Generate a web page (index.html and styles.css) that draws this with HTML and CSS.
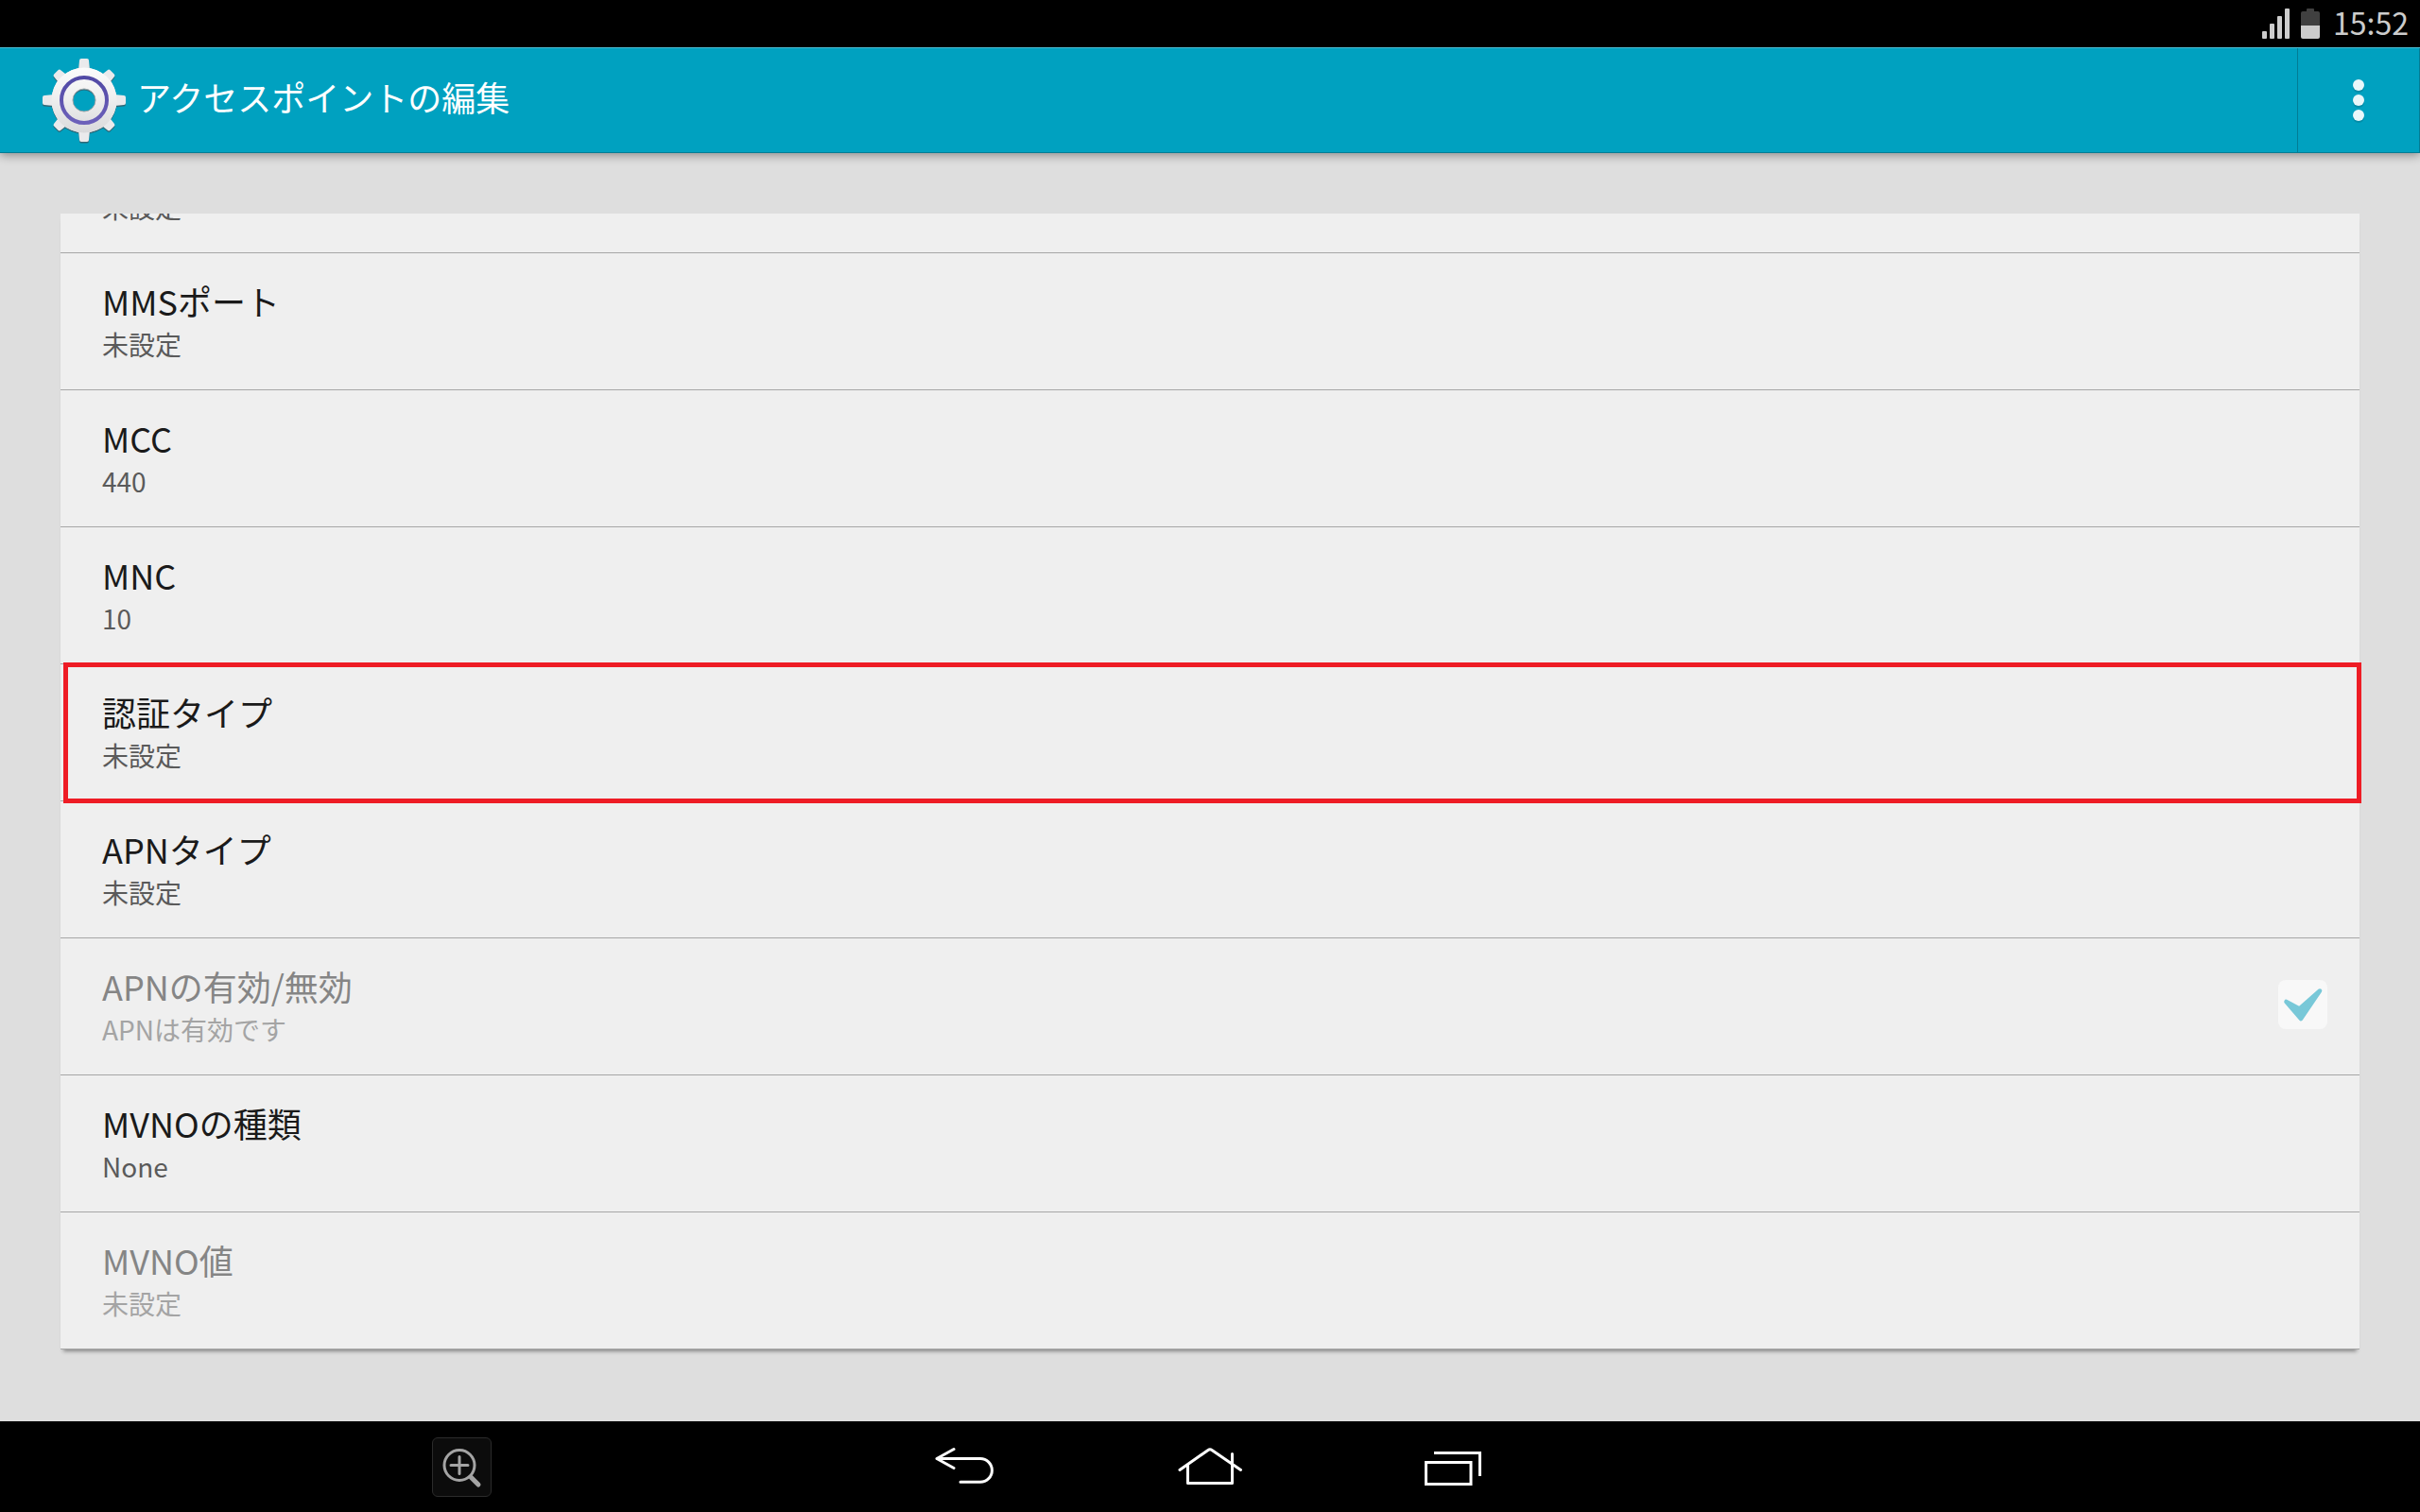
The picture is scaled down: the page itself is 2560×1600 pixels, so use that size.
FILE: index.html
```html
<!DOCTYPE html>
<html lang="ja">
<head>
<meta charset="utf-8">
<meta name="viewport" content="width=device-width, initial-scale=1">
<title>アクセスポイントの編集</title>
<link rel="stylesheet" href="styles.css">
</head>
<body>
<div class="status-bar">
  <svg class="status-icon" width="61" height="32" viewBox="0 0 61 32" aria-hidden="true">
    <g fill="#cccccc">
      <rect x="0" y="24" width="5" height="8" rx="1"/>
      <rect x="8" y="16" width="5" height="16" rx="1"/>
      <rect x="16" y="8" width="5" height="24" rx="1"/>
      <rect x="24" y="0" width="5" height="32" rx="1"/>
    </g>
    <path d="M41 18V5q0-2 2-2h4V1q0-1 1-1h6q1 0 1 1v2h4q2 0 2 2v13z" fill="#404040"/>
    <path d="M41 18h20v12q0 2-2 2H43q-2 0-2-2z" fill="#cccccc"/>
  </svg>
  <time class="clock">15:52</time>
</div>

<header class="action-bar">
  <svg class="gear" width="96" height="96" viewBox="-48 -48 96 96" aria-hidden="true">
    <defs>
      <linearGradient id="metal" gradientUnits="userSpaceOnUse" x1="0" y1="-44" x2="0" y2="44">
        <stop offset="0" stop-color="#ffffff"/>
        <stop offset="0.45" stop-color="#f0f0f0"/>
        <stop offset="1" stop-color="#d4d4d6"/>
      </linearGradient>
      <linearGradient id="ring" x1="0" y1="0" x2="0" y2="1">
        <stop offset="0" stop-color="#5149a5"/>
        <stop offset="1" stop-color="#6c60ba"/>
      </linearGradient>
      <path id="tooth" d="M-6-32L-5-42Q-5-44-3-44H3Q5-44 5-42L6-32z"/>
      <path id="tooth-short" d="M-6-32L-5-40Q-5-42-3-42H3Q5-42 5-40L6-32z"/>
      <g id="gear-shape">
        <path fill-rule="evenodd" d="M0-34.500A34.500 34.500 0 1 1 0 34.500A34.500 34.500 0 1 1 0-34.500zM0-12A12 12 0 1 0 0 12A12 12 0 1 0 0-12z"/>
        <use href="#tooth"/>
        <use href="#tooth" transform="rotate(90)"/>
        <use href="#tooth" transform="rotate(180)"/>
        <use href="#tooth" transform="rotate(270)"/>
        <use href="#tooth-short" transform="rotate(45)"/>
        <use href="#tooth-short" transform="rotate(135)"/>
        <use href="#tooth-short" transform="rotate(225)"/>
        <use href="#tooth-short" transform="rotate(315)"/>
      </g>
    </defs>
    <use href="#gear-shape" y="1.500" fill="#3c5a66" opacity="0.8"/>
    <g fill="#eaeaec">
      <use href="#gear-shape"/>
    </g>
    <path fill="url(#metal)" fill-rule="evenodd" d="M0-34.500A34.500 34.500 0 1 1 0 34.500A34.500 34.500 0 1 1 0-34.500zM0-12A12 12 0 1 0 0 12A12 12 0 1 0 0-12z"/>
    <circle r="24" fill="none" stroke="url(#ring)" stroke-width="4"/>
    <circle r="12" fill="none" stroke="#9aa4a8" stroke-width="1"/>
  </svg>
  <h1 class="title">アクセスポイントの編集</h1>
  <button class="overflow" type="button" aria-label="その他">
    <svg width="20" height="48" viewBox="0 0 20 48" aria-hidden="true">
      <g fill="#057f99" opacity="0.6"><circle cx="10" cy="10" r="6"/><circle cx="10" cy="26" r="6"/><circle cx="10" cy="42" r="6"/></g>
      <g fill="#e9f7fa"><circle cx="10" cy="8" r="6"/><circle cx="10" cy="24" r="6"/><circle cx="10" cy="40" r="6"/></g>
    </svg>
  </button>
</header>

<main class="content">
  <ul class="card">
    <li class="item"><button class="row" type="button"><span class="texts"><span class="value">未設定</span></span></button></li>
    <li class="item"><button class="row" type="button"><span class="texts"><span class="name">MMSポート</span><span class="value">未設定</span></span></button></li>
    <li class="item"><button class="row" type="button"><span class="texts"><span class="name">MCC</span><span class="value">440</span></span></button></li>
    <li class="item"><button class="row" type="button"><span class="texts"><span class="name">MNC</span><span class="value">10</span></span></button></li>
    <li class="item highlighted"><button class="row" type="button"><span class="texts"><span class="name">認証タイプ</span><span class="value">未設定</span></span></button></li>
    <li class="item"><button class="row" type="button"><span class="texts"><span class="name">APNタイプ</span><span class="value">未設定</span></span></button></li>
    <li class="item">
      <label class="row disabled" for="apn-enabled">
        <span class="texts"><span class="name">APNの有効/無効</span><span class="value">APNは有効です</span></span>
        <span class="check">
          <input class="check-input" id="apn-enabled" type="checkbox" checked disabled>
          <svg class="check-mark" width="52" height="52" viewBox="0 0 52 52" aria-hidden="true">
            <path d="M8.500 23L24 41L44 11.500L22.500 30.500z" fill="#78c8d8" stroke="#78c8d8" stroke-width="4.600" stroke-linejoin="round"/>
          </svg>
        </span>
      </label>
    </li>
    <li class="item"><button class="row" type="button"><span class="texts"><span class="name">MVNOの種類</span><span class="value">None</span></span></button></li>
    <li class="item"><button class="row disabled" type="button" disabled><span class="texts"><span class="name">MVNO値</span><span class="value">未設定</span></span></button></li>
  </ul>
</main>

<nav class="nav-bar" aria-label="システム">
  <button class="zoom-button" type="button" aria-label="拡大">
    <svg width="61" height="61" viewBox="0 0 61 61" fill="none" stroke="#a4a4a4" stroke-linecap="round" aria-hidden="true">
      <circle cx="28" cy="28.500" r="16" stroke-width="3"/>
      <path d="M28 19.500V37.500M19 28.500H37" stroke-width="3"/>
      <path d="M40 41L48 49" stroke-width="5"/>
    </svg>
  </button>
  <button class="nav-button" type="button" aria-label="戻る">
    <svg width="260" height="96" viewBox="0 0 260 96" aria-hidden="true"><path d="M119 29.500L101 39.500L119 49.500M101 39.500H147A12.400 12.400 0 0 1 147 64.300H126"/></svg>
  </button>
  <button class="nav-button" type="button" aria-label="ホーム">
    <svg width="260" height="96" viewBox="0 0 260 96" aria-hidden="true"><path d="M98 51.500L128 30.500Q130 29 132 30.500L162.500 51.500M106.500 46V65.500H153.500V34.500"/></svg>
  </button>
  <button class="nav-button" type="button" aria-label="最近使ったアプリ">
    <svg class="square" width="260" height="96" viewBox="0 0 260 96" aria-hidden="true"><path d="M107 33.500H155.500V58M98.500 43.500H146V66.500H98.500z"/></svg>
  </button>
</nav>
</body>
</html>
```
FILE: styles.css
```css
* {
  box-sizing: border-box;
}

body {
  margin: 0;
  height: 100vh;
  display: flex;
  flex-direction: column;
  background: #dedede;
  color: #1a1a1a;
  font-family: "Noto Sans CJK JP", "Noto Sans", sans-serif;
  overflow: hidden;
}

button {
  margin: 0;
  padding: 0;
  border: 0;
  background: none;
  color: inherit;
  font: inherit;
  text-align: left;
}

svg {
  display: block;
  flex: none;
}

/* Status bar */
.status-bar {
  flex: none;
  height: 50px;
  display: flex;
  align-items: center;
  justify-content: flex-end;
  gap: 14px;
  padding-right: 12px;
  background: #000;
}

.clock {
  padding-bottom: 4px;
  color: #ccc;
  font-size: 32px;
  line-height: 44px;
}

/* Action bar */
.action-bar {
  flex: none;
  height: 112px;
  display: flex;
  align-items: center;
  gap: 8px;
  padding-left: 41px;
  background: #00a1c0;
  border-top: 1px solid #4dbdd3;
  border-bottom: 1px solid #027c94;
  box-shadow: 0 2px 10px rgba(0, 0, 0, 0.4);
}

.title {
  flex: 1;
  margin: 0;
  padding-bottom: 8px;
  color: #fff;
  font-size: 36px;
  font-weight: 400;
  line-height: 44px;
}

.overflow {
  align-self: stretch;
  width: 130px;
  display: flex;
  align-items: center;
  justify-content: center;
  border-left: 1px solid #027c94;
  border-right: 1px solid #027c94;
}

/* Settings list */
.content {
  flex: 1;
  min-height: 0;
  display: flex;
  flex-direction: column;
  padding: 64px 64px 76px;
}

.card {
  flex: 1;
  min-height: 0;
  display: flex;
  flex-direction: column;
  justify-content: flex-end;
  margin: 0;
  padding: 0;
  list-style: none;
  background: #efefef;
  overflow-x: visible;
  overflow-y: clip;
  box-shadow: 0 5px 4px -3px rgba(0, 0, 0, 0.4);
}

.item {
  position: relative;
  flex: none;
  border-bottom: 1px solid #a6a6a6;
}

.row {
  width: 100%;
  min-height: 144px;
  display: flex;
  align-items: center;
  padding: 0 34px 0 44px;
}

.texts {
  flex: 1;
  align-self: flex-end;
  display: flex;
  flex-direction: column;
  gap: 2px;
  padding: 28px 0 26px;
}

.name {
  font-size: 36px;
  line-height: 44px;
}

.value {
  color: #5a5a5a;
  font-size: 28px;
  line-height: 44px;
}

.disabled .name {
  color: #858585;
}

.disabled .value {
  color: #a4a4a4;
}

.highlighted::after {
  content: "";
  position: absolute;
  inset: -2px -2px -3px 3px;
  border: 5px solid #ee1c25;
  pointer-events: none;
}

.check {
  display: grid;
  padding-bottom: 4px;
}

.check-input,
.check-mark {
  grid-area: 1 / 1;
}

.check-input {
  appearance: none;
  width: 52px;
  height: 52px;
  margin: 0;
  border-radius: 8px;
  background: #f8f8f8;
}

.check-mark {
  position: relative;
  visibility: hidden;
}

.check-input:checked + .check-mark {
  visibility: visible;
}

/* System navigation */
.nav-bar {
  flex: none;
  height: 96px;
  display: grid;
  grid-template-columns: 1fr 260px 260px 260px 1fr;
  align-items: center;
  background: #000;
}

.zoom-button {
  justify-self: end;
  margin-right: 370px;
  border: 1px solid #2b2b2b;
  border-radius: 6px;
  background: #0c0c0c;
}

.nav-button svg {
  fill: none;
  stroke: #fff;
  stroke-width: 3px;
  stroke-linecap: round;
  stroke-linejoin: round;
}

.nav-button .square {
  stroke-linecap: butt;
  stroke-linejoin: miter;
}
```
